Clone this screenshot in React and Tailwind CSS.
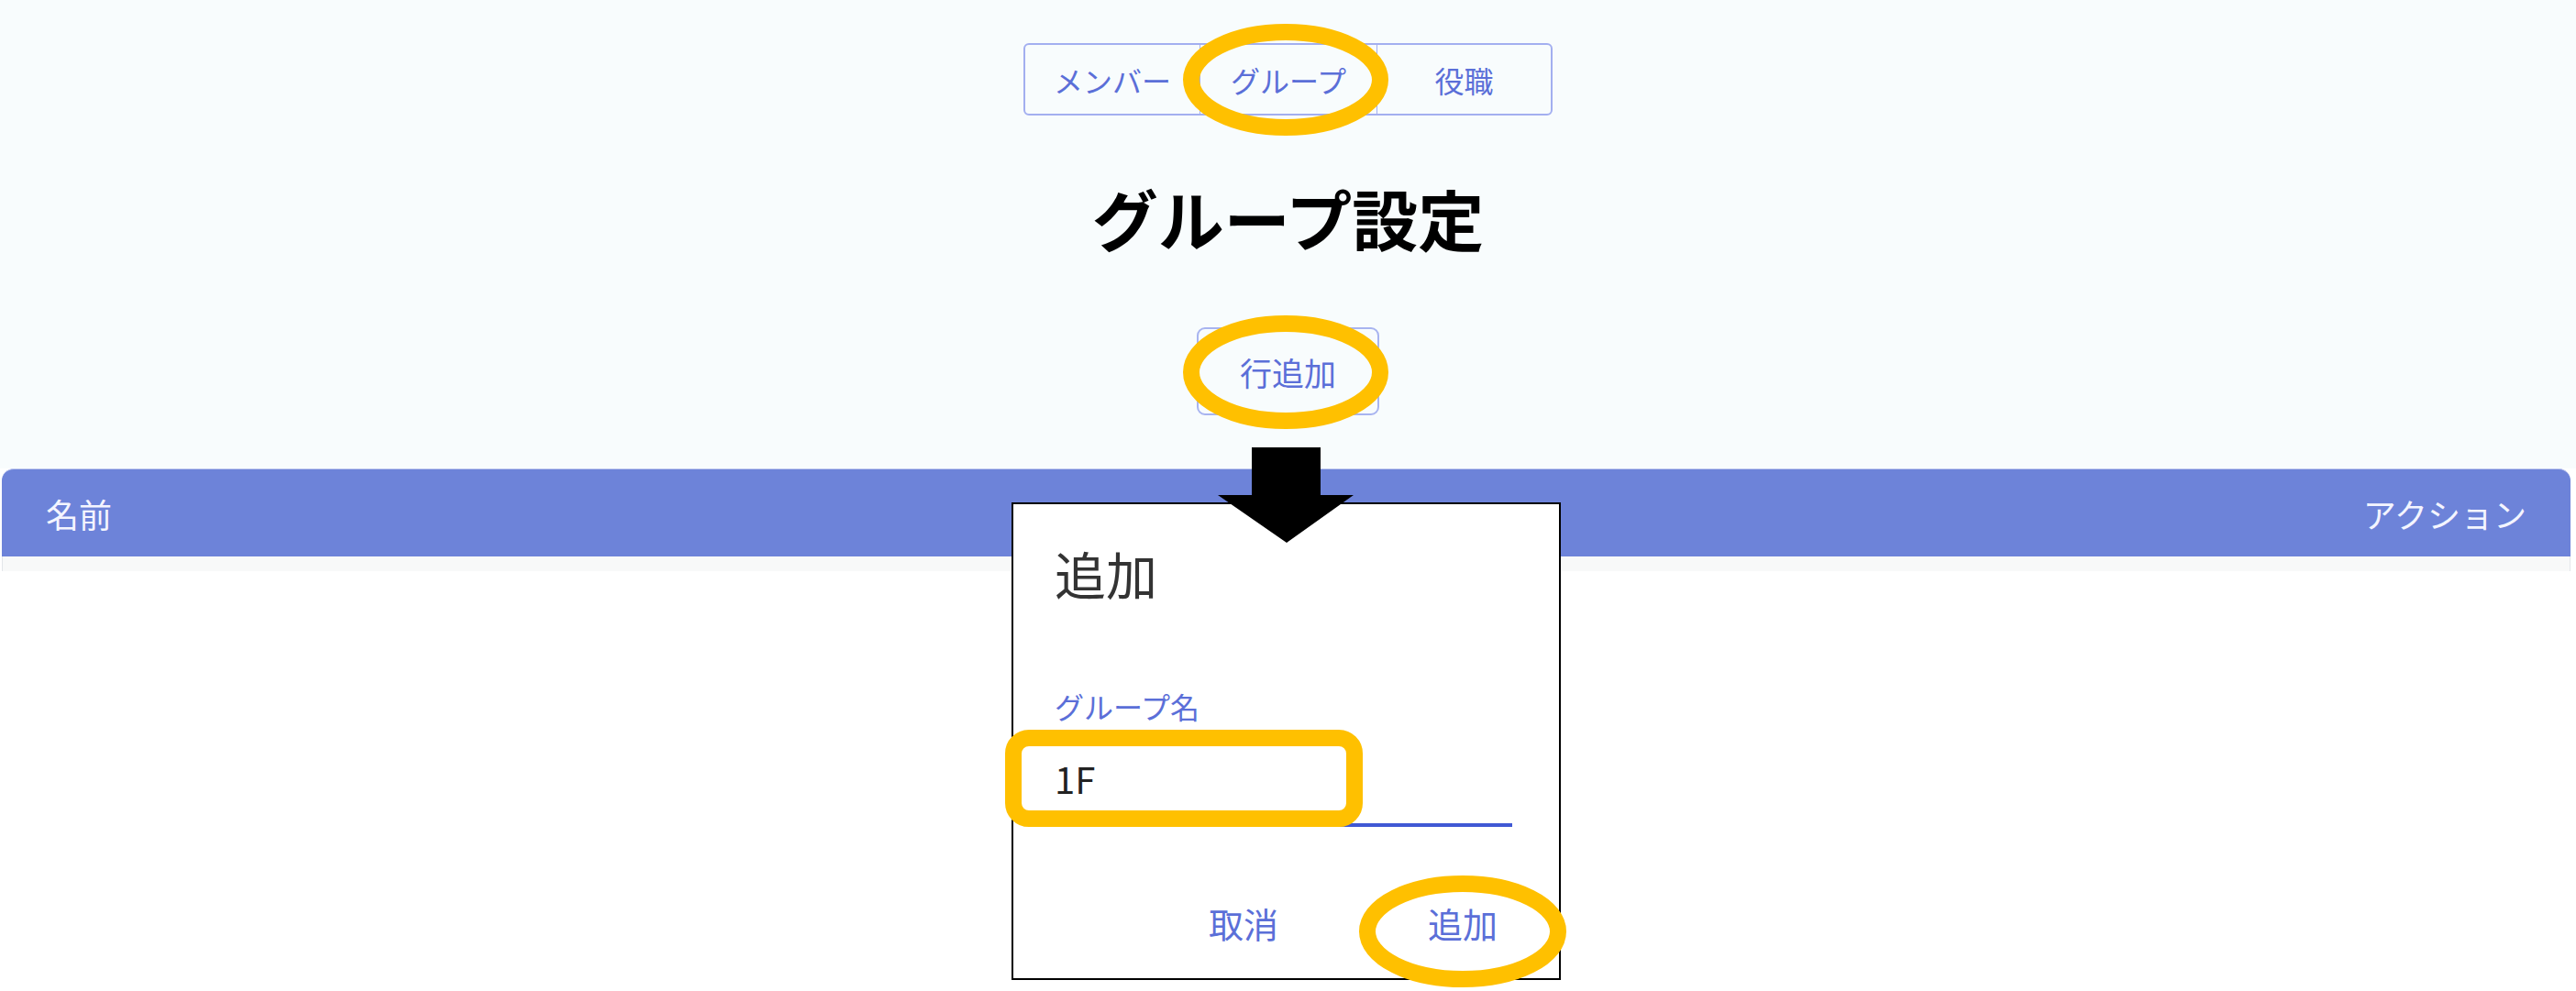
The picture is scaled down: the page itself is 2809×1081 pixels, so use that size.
import React, { useState } from "react";

const tabs = [
	{ key: "member", label: "メンバー", width: "w-[190px]" },
	{ key: "group", label: "グループ", width: "w-[193px]" },
	{ key: "role", label: "役職", width: "w-[190px]" },
];

const Highlights = () => (
	<svg className="pointer-events-none absolute left-0 top-0" width="2809" height="1081" viewBox="0 0 2809 1081">
		{/* arrow from the button down to the dialog */}
		<polygon points="1365,488 1440,488 1440,540 1476,540 1403,592 1328,540 1365,540" fill="#000" />
		<g fill="none" stroke="#ffc000" strokeWidth="18">
			<ellipse cx="1402" cy="87" rx="103" ry="52" />
			<ellipse cx="1402" cy="406" rx="103" ry="53" />
			<rect x="1105" y="805" width="372" height="88" rx="17" />
			<ellipse cx="1595" cy="1016" rx="104" ry="52" />
		</g>
	</svg>
);

const AddModal = ({ value, setValue }) => (
	<div className="absolute left-[1103px] top-[548px] flex h-[521px] w-[599px] flex-col border-2 border-black bg-white pl-[45px] pr-[51px] pt-[47px]">
		<h2 className="text-[56px] font-normal leading-none text-[#333333]">追加</h2>
		<label className="mt-[101px] text-[32px] leading-none text-[#5b6fd8]">グループ名</label>
		<div className="mt-[43px] border-b-4 border-[#4058d4] pb-[27px]">
			<input
				type="text"
				className="h-[40px] w-full bg-transparent p-0 text-[40px] leading-none text-[#222222] outline-none"
				value={value}
				onChange={(evt) => setValue(evt.target.value)}
			/>
		</div>
		<div className="mt-[86px] flex justify-end gap-[131px]">
			<button className="px-4 text-[38px] leading-none text-[#5b6fd8]">取消</button>
			<button className="px-4 text-[38px] leading-none text-[#5b6fd8]">追加</button>
		</div>
	</div>
);

const App = () => {
	const [tab, setTab] = useState("group");
	const [name, setName] = useState("1F");

	return (
		<div className="relative h-[1081px] w-[2809px] overflow-hidden bg-white font-['Noto_Sans_CJK_JP',sans-serif]">
			<div className="flex flex-col items-center bg-[#f8fcfd] pb-[58px] pt-[47px]">
				<div className="flex h-[79px] rounded-[6px] border-2 border-[#a3aff0]">
					{tabs.map((el, index) => (
						<button
							key={el.key}
							onClick={() => setTab(el.key)}
							className={`${el.width} flex items-center justify-center text-[32px] leading-none text-[#5b6fd8] ${
								index > 0 ? "border-l border-[#a3aff0]" : ""
							} ${tab === el.key ? "bg-transparent" : ""}`}
						>
							{el.label}
						</button>
					))}
				</div>
				<h1 className="mt-[75px] text-[72px] font-bold leading-none text-black">グループ設定</h1>
				<button className="mt-[84px] flex h-[96px] w-[199px] items-center justify-center rounded-[9px] border-2 border-[#a8b4f0] text-[35px] leading-none text-[#5b6fd8]">
					行追加
				</button>
			</div>

			<div className="ml-[2px] mr-[6px]">
				<div className="flex h-[96px] items-center justify-between rounded-t-[13px] border-t border-[#c3cbf0] bg-[#6d83d9] px-[48px] text-[36px] leading-none text-[#f4f5ff]">
					<span>名前</span>
					<span>アクション</span>
				</div>
				<div className="h-[16px] border-x border-[#e3e6ea] bg-[#f8f9f9]"></div>
			</div>

			<AddModal value={name} setValue={setName} />
			<Highlights />
		</div>
	);
};

export default App;
